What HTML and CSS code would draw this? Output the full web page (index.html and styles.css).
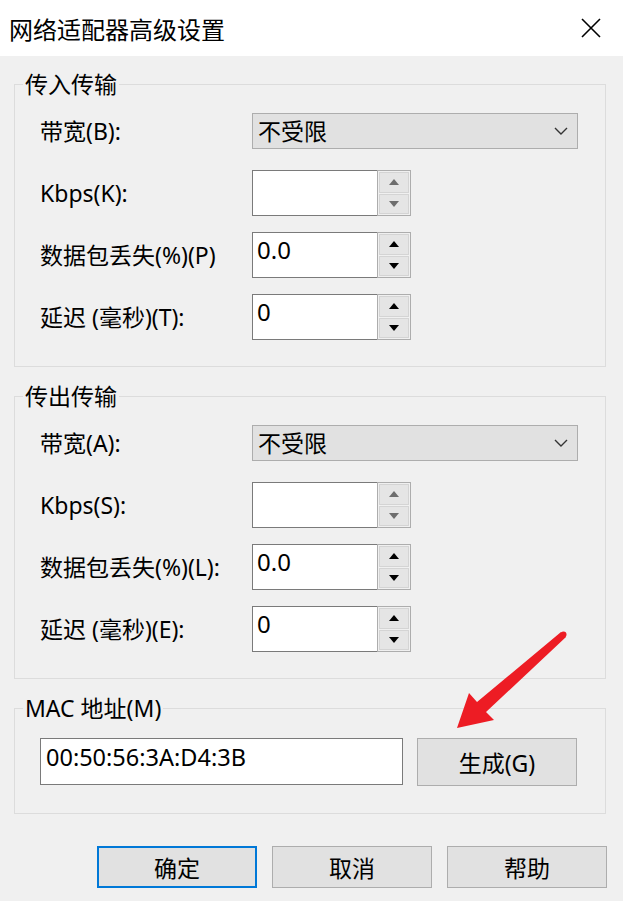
FILE: index.html
```html
<!DOCTYPE html>
<html lang="zh-CN">
  <head>
    <meta charset="UTF-8" />
    <meta name="viewport" content="width=device-width, initial-scale=1.0" />
    <title>网络适配器高级设置</title>
    <link rel="stylesheet" href="styles.css">
  </head>
  <body>
    <div class="dialog">
      <div class="titlebar">
        <span class="title">网络适配器高级设置</span>
        <svg class="close" width="20" height="20" viewBox="0 0 20 20">
          <path d="M1 1 L19 19 M19 1 L1 19" stroke="#000" stroke-width="1.6" fill="none" />
        </svg>
      </div>

      <div class="content">
        <fieldset class="group">
          <legend>传入传输</legend>
          <div class="form">
            <label class="row-combo">带宽(B):</label>
            <div class="combo row-combo">
              <span>不受限</span>
              <svg width="14" height="8" viewBox="0 0 14 8">
                <path d="M1 1 L7 7 L13 1" stroke="#333" stroke-width="1.4" fill="none" />
              </svg>
            </div>

            <label>Kbps(K):</label>
            <div class="spin off">
              <div class="spin-edit"></div>
              <div class="spin-btns">
                <div class="spin-btn"><i class="up"></i></div>
                <div class="spin-btn"><i class="down"></i></div>
              </div>
            </div>

            <label>数据包丢失(%)(P)</label>
            <div class="spin">
              <div class="spin-edit">0.0</div>
              <div class="spin-btns">
                <div class="spin-btn"><i class="up"></i></div>
                <div class="spin-btn"><i class="down"></i></div>
              </div>
            </div>

            <label>延迟 (毫秒)(T):</label>
            <div class="spin">
              <div class="spin-edit">0</div>
              <div class="spin-btns">
                <div class="spin-btn"><i class="up"></i></div>
                <div class="spin-btn"><i class="down"></i></div>
              </div>
            </div>
          </div>
        </fieldset>

        <fieldset class="group">
          <legend>传出传输</legend>
          <div class="form">
            <label class="row-combo">带宽(A):</label>
            <div class="combo row-combo">
              <span>不受限</span>
              <svg width="14" height="8" viewBox="0 0 14 8">
                <path d="M1 1 L7 7 L13 1" stroke="#333" stroke-width="1.4" fill="none" />
              </svg>
            </div>

            <label>Kbps(S):</label>
            <div class="spin off">
              <div class="spin-edit"></div>
              <div class="spin-btns">
                <div class="spin-btn"><i class="up"></i></div>
                <div class="spin-btn"><i class="down"></i></div>
              </div>
            </div>

            <label>数据包丢失(%)(L):</label>
            <div class="spin">
              <div class="spin-edit">0.0</div>
              <div class="spin-btns">
                <div class="spin-btn"><i class="up"></i></div>
                <div class="spin-btn"><i class="down"></i></div>
              </div>
            </div>

            <label>延迟 (毫秒)(E):</label>
            <div class="spin">
              <div class="spin-edit">0</div>
              <div class="spin-btns">
                <div class="spin-btn"><i class="up"></i></div>
                <div class="spin-btn"><i class="down"></i></div>
              </div>
            </div>
          </div>
        </fieldset>

        <fieldset class="group mac">
          <legend>MAC 地址(M)</legend>
          <div class="mac-row">
            <div class="mac-input">00:50:56:3A:D4:3B</div>
            <button class="btn gen">生成(G)</button>
          </div>
        </fieldset>

        <div class="actions">
          <button class="btn default">确定</button>
          <button class="btn">取消</button>
          <button class="btn">帮助</button>
        </div>
      </div>

      <!-- 红色箭头标注 -->
      <svg class="arrow" width="623" height="901" viewBox="0 0 623 901">
        <polygon points="561,632 566,637 486,712 494,720 457,728 469,693 477,702" fill="#ed1c24" />
        <circle cx="563.5" cy="634.5" r="3" fill="#ed1c24" />
      </svg>
    </div>
  </body>
</html>
```

FILE: styles.css
```css
body {
  margin: 0;
  background-color: #f0f0f0;
  font-family: "Noto Sans", "Noto Sans CJK SC", sans-serif;
  font-size: 23px;
  color: #000;
}

.dialog {
  position: relative;
  width: 623px;
  height: 901px;
  overflow: hidden;
}

.titlebar {
  height: 56px;
  background-color: white;
  display: flex;
  align-items: center;
  justify-content: space-between;
  padding: 0 22px 0 9px;
}

.title {
  font-size: 24px;
  font-family: "Noto Sans CJK SC", sans-serif;
}

.content {
  padding: 13px 17px 0 14px;
}

.group {
  margin: 0 0 14px 0;
  padding: 14px 0 26px 25px;
  border: 1px solid #dcdcdc;
  min-inline-size: 0;
}

.group legend {
  margin-left: -17px;
  padding: 0 2px;
  line-height: 30px;
  font-size: 23px;
}

.form {
  display: grid;
  grid-template-columns: 212px 326px;
  row-gap: 16px;
  align-items: center;
}

.form label {
  line-height: 30px;
  white-space: nowrap;
}

.row-combo {
  margin-bottom: 5px;
}

.combo {
  height: 34px;
  background-color: #e1e1e1;
  border: 1px solid #adadad;
  display: flex;
  align-items: center;
  justify-content: space-between;
  padding: 0 9px 0 5px;
  line-height: 30px;
}

.spin {
  display: flex;
  height: 46px;
  width: 159px;
}

.spin-edit {
  width: 120px;
  background-color: white;
  border: 1px solid #7a7a7a;
  border-right: none;
  padding: 0 0 0 4px;
  font-size: 24px;
  line-height: 34px;
}

.spin-btns {
  flex: 1;
  border: 1px solid #adadad;
  padding: 1px;
  display: flex;
  flex-direction: column;
  gap: 1px;
}

.spin-btn {
  flex: 1;
  border: 1px solid #d4d4d4;
  background-color: #e5e5e5;
  display: flex;
  align-items: center;
  justify-content: center;
}

.spin-btn i {
  width: 0;
  height: 0;
  border-left: 5px solid transparent;
  border-right: 5px solid transparent;
}

.spin-btn .up {
  border-bottom: 6px solid #000;
}

.spin-btn .down {
  border-top: 6px solid #000;
}

.spin.off .up {
  border-bottom-color: #6d6d6d;
}

.spin.off .down {
  border-top-color: #6d6d6d;
}

.mac {
  padding: 15px 0 27px 25px;
}

.mac-row {
  display: flex;
  gap: 14px;
  align-items: flex-start;
}

.mac-input {
  width: 356px;
  height: 45px;
  background-color: white;
  border: 1px solid #7a7a7a;
  padding-left: 5px;
  font-size: 23.5px;
  line-height: 36px;
}

.btn {
  font-family: "Noto Sans", "Noto Sans CJK SC", sans-serif;
  font-size: 23px;
  color: #000;
  background-color: #e1e1e1;
  border: 1px solid #adadad;
  width: 160px;
  height: 42px;
  padding: 0;
}

.gen {
  height: 48px;
}

.actions {
  display: flex;
  justify-content: flex-end;
  gap: 15px;
  margin-top: 32px;
  margin-right: -1px;
}

.default {
  border: 2px solid #0078d7;
}

.arrow {
  position: absolute;
  left: 0;
  top: 0;
  pointer-events: none;
}
```
